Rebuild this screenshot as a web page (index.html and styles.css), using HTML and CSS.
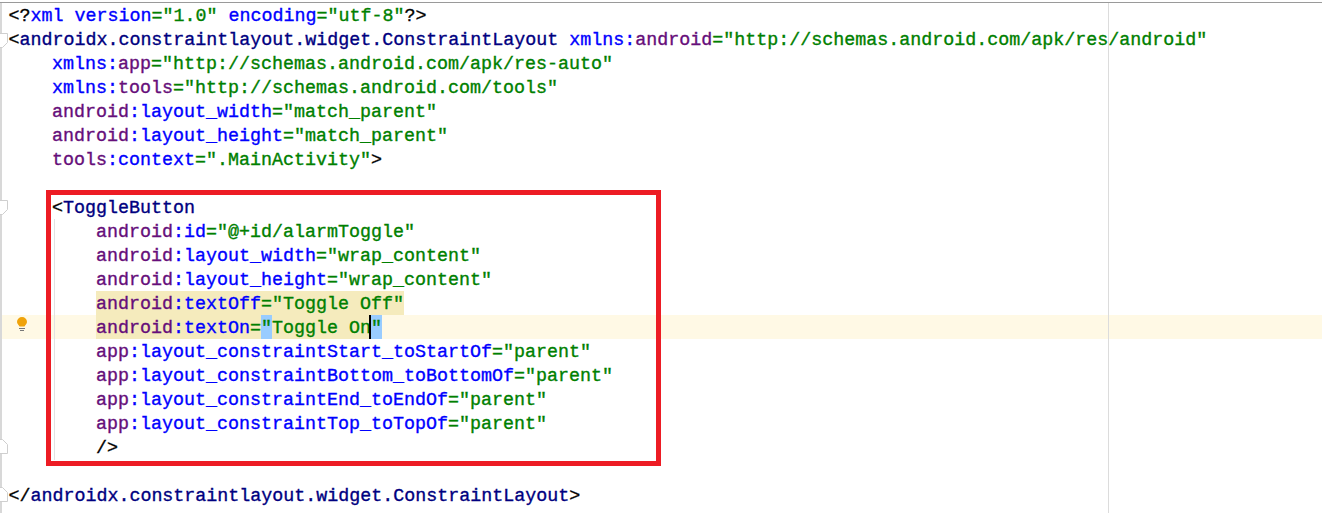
FILE: index.html
```html
<!DOCTYPE html>
<html lang="en">
<head>
<meta charset="utf-8">
<title>activity_main.xml</title>
<link rel="stylesheet" href="styles.css">
</head>
<body>
<div class="editor">
  <div class="gutter"></div>
  <div class="code">
    <div class="line"><span class="p">&lt;?</span><span class="k">xml version</span><span class="g">=</span><span class="s">"1.0" </span><span class="k">encoding</span><span class="g">=</span><span class="s">"utf-8"</span><span class="p">?&gt;</span></div>
    <div class="line"><span class="p">&lt;</span><span class="t">androidx.constraintlayout.widget.ConstraintLayout </span><span class="k">xmlns:</span><span class="n">android</span><span class="g">=</span><span class="s">"http://schemas.android.com/apk/res/android"</span></div>
    <div class="line i1"><span class="k">xmlns:</span><span class="n">app</span><span class="g">=</span><span class="s">"http://schemas.android.com/apk/res-auto"</span></div>
    <div class="line i1"><span class="k">xmlns:</span><span class="n">tools</span><span class="g">=</span><span class="s">"http://schemas.android.com/tools"</span></div>
    <div class="line i1"><span class="n">android</span><span class="k">:layout_width</span><span class="g">=</span><span class="s">"match_parent"</span></div>
    <div class="line i1"><span class="n">android</span><span class="k">:layout_height</span><span class="g">=</span><span class="s">"match_parent"</span></div>
    <div class="line i1"><span class="n">tools</span><span class="k">:context</span><span class="g">=</span><span class="s">".MainActivity"</span><span class="p">&gt;</span></div>
    <div class="line"></div>
    <div class="line i1"><span class="p">&lt;</span><span class="t">ToggleButton</span></div>
    <div class="line i2"><span class="n">android</span><span class="k">:id</span><span class="g">=</span><span class="s">"@+id/alarmToggle"</span></div>
    <div class="line i2"><span class="n">android</span><span class="k">:layout_width</span><span class="g">=</span><span class="s">"wrap_content"</span></div>
    <div class="line i2"><span class="n">android</span><span class="k">:layout_height</span><span class="g">=</span><span class="s">"wrap_content"</span></div>
    <div class="line i2"><span class="mark"><span class="n">android</span><span class="k">:textOff</span><span class="g">=</span><span class="s">"Toggle Off"</span></span></div>
    <div class="line i2 current"><span class="mark"><span class="n">android</span><span class="k">:textOn</span><span class="g">=</span><span class="s brace">"</span><span class="s">Toggle On</span><span class="s brace caret">"</span></span></div>
    <div class="line i2"><span class="n">app</span><span class="k">:layout_constraintStart_toStartOf</span><span class="g">=</span><span class="s">"parent"</span></div>
    <div class="line i2"><span class="n">app</span><span class="k">:layout_constraintBottom_toBottomOf</span><span class="g">=</span><span class="s">"parent"</span></div>
    <div class="line i2"><span class="n">app</span><span class="k">:layout_constraintEnd_toEndOf</span><span class="g">=</span><span class="s">"parent"</span></div>
    <div class="line i2"><span class="n">app</span><span class="k">:layout_constraintTop_toTopOf</span><span class="g">=</span><span class="s">"parent"</span></div>
    <div class="line i2"><span class="p">/&gt;</span></div>
    <div class="line"></div>
    <div class="line"><span class="p">&lt;/</span><span class="t">androidx.constraintlayout.widget.ConstraintLayout</span><span class="p">&gt;</span></div>
  </div>
</div>
<div class="margin-line"></div>
<div class="guide"></div>
<div class="gutter-line"></div>
<div class="redbox"></div>
<svg class="fold fold-a" width="8" height="15" viewBox="0 0 8 15"><path d="M0 .5H7.500V9.500L2.500 14.500H0" fill="#fff" stroke="#cfcfcf"/></svg>
<svg class="fold fold-b" width="8" height="15" viewBox="0 0 8 15"><path d="M0 .5H7.500V9.500L2.500 14.500H0" fill="#fff" stroke="#cfcfcf"/></svg>
<svg class="fold fold-c" width="8" height="15" viewBox="0 0 8 15"><path d="M0 14.500H7.500V5.500L2.500 .5H0" fill="#fff" stroke="#cfcfcf"/></svg>
<svg class="fold fold-d" width="8" height="15" viewBox="0 0 8 15"><path d="M0 14.500H7.500V5.500L2.500 .5H0" fill="#fff" stroke="#cfcfcf"/></svg>
<svg class="bulb" width="12" height="15" viewBox="0 0 12 15"><path d="M6 0A5 5 0 0 0 1 5C1 7 3 8 3.500 9.500H8.500C9 8 11 7 11 5A5 5 0 0 0 6 0Z" fill="#f0a30a"/><path d="M3 11.500H9M4 13.500H8" stroke="#777" fill="none"/></svg>
</body>
</html>
```
FILE: styles.css
```css
html, body {
  margin: 0;
  height: 100%;
  background: #fff;
  overflow: hidden;
}
.editor {
  display: flex;
  height: 511px;
  box-sizing: border-box;
  border-top: 1px solid #9a9a9a;
  margin-top: 2px;
}
.gutter {
  width: 8px;
  flex: none;
}
.code {
  flex: 1;
  font-family: "Liberation Mono", monospace;
  font-size: 18.33px;
  line-height: 28px;
  color: #000;
  margin-left: -8px;
  -webkit-text-stroke: 0.35px;
}
.line {
  height: 24px;
  padding-left: 8.4px;
  white-space: pre;
}
.i1 { padding-left: 52px; }
.i2 { padding-left: 96px; }
.current { background: #fff9e5; }
.mark { background: #f5ebbd; display: inline-block; height: 24px; }
.p { color: #000; }
.k { color: #0000ff; }
.n { color: #660e7a; }
.t { color: #000080; }
.g { color: #008000; }
.s { color: #008000; }
.brace { background: #99ccff; display: inline-block; height: 24px; }
.caret { box-shadow: -2px 0 0 #000; }
.margin-line {
  position: absolute;
  left: 1108px;
  top: 3px;
  width: 1px;
  height: 510px;
  background: #dcdcdc;
}
.guide {
  position: absolute;
  left: 54px;
  top: 219px;
  width: 1px;
  height: 241px;
  background: #e2e2e2;
}
.gutter-line {
  position: absolute;
  left: 0;
  top: 3px;
  width: 2px;
  height: 510px;
  background: #d8d8d8;
}
.redbox {
  position: absolute;
  left: 46px;
  top: 190px;
  width: 615px;
  height: 276px;
  box-sizing: border-box;
  border: 5px solid #ed1c24;
}
.fold { position: absolute; left: 0; }
.fold-a { top: 33px; }
.fold-b { top: 200px; }
.fold-c { top: 439px; }
.fold-d { top: 487px; }
.bulb { position: absolute; left: 16px; top: 317px; }
```
